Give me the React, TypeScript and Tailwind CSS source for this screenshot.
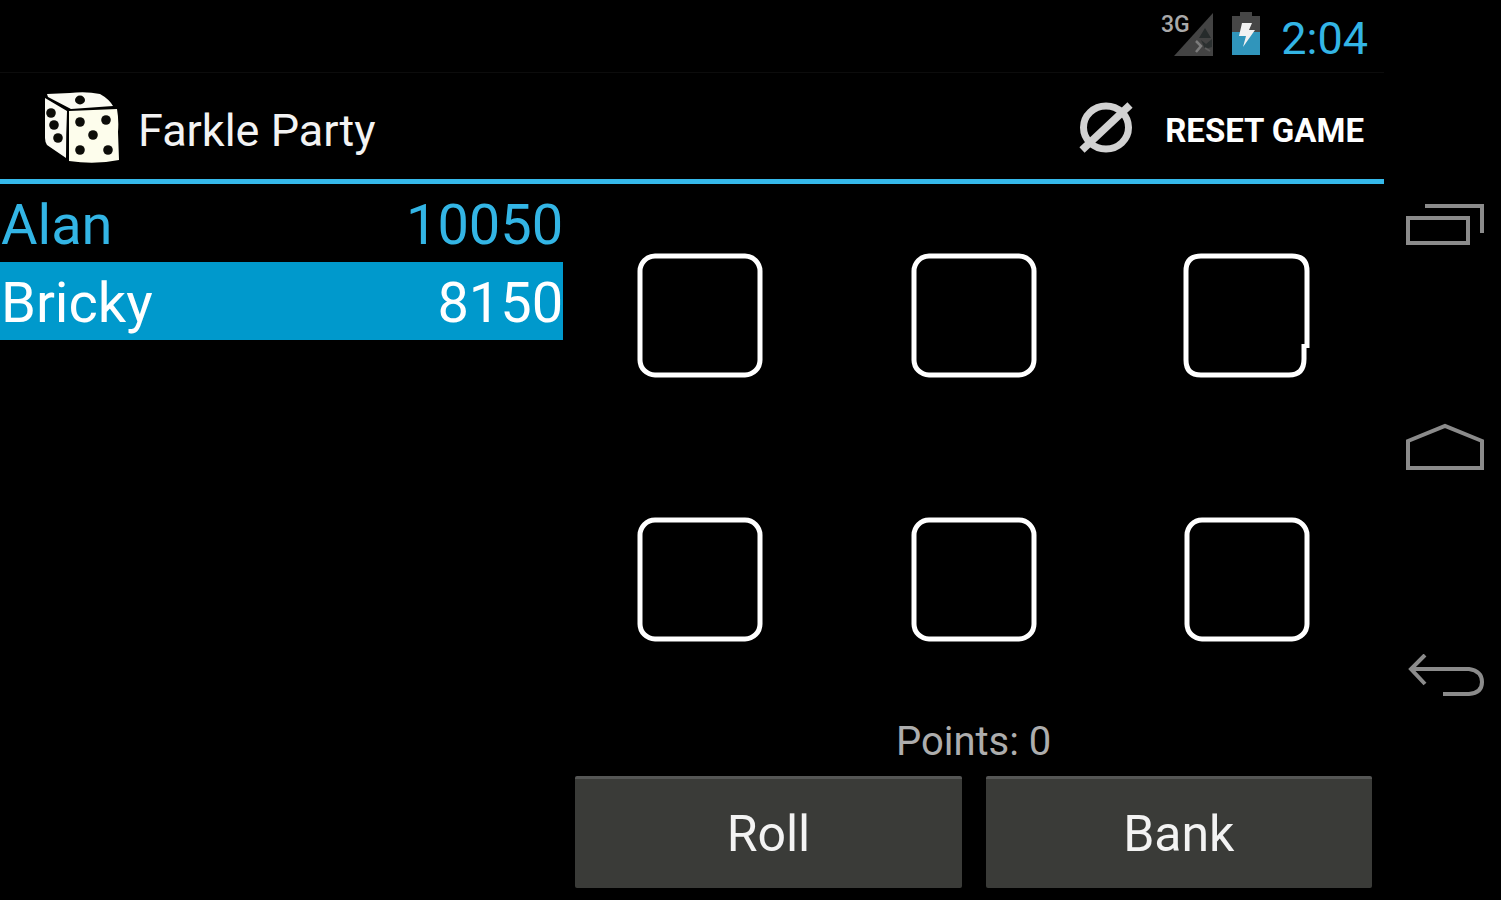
import React from "react";

type Player = { name: string; score: number; active: boolean };

const players: Player[] = [
  { name: "Alan", score: 10050, active: false },
  { name: "Bricky", score: 8150, active: true },
];

function SignalIcon() {
  return (
    <svg width="54" height="48" viewBox="0 0 54 48" aria-hidden="true">
      <path d="M52 3V46H13Z" fill="#434343" />
      <path d="M44 18l6 10H38Z" fill="#262b2b" />
      <path d="M35 31l5 5-5 6" fill="none" stroke="#7c7c7c" strokeWidth="2.5" />
      <path d="M40 30l5 4 6-5v8l-7 2Z" fill="#2b3030" />
      <path d="M44 38l5 3" fill="none" stroke="#5c5c5c" strokeWidth="2" />
      <text x="0" y="22" fill="#a9a9a9" fontSize="23" fontWeight="500" fontFamily="Roboto, sans-serif">
        3G
      </text>
    </svg>
  );
}

function BatteryIcon() {
  return (
    <svg width="30" height="44" viewBox="0 0 30 44" aria-hidden="true">
      <path d="M9 0H21V4H29V21H1V4H9Z" fill="#464646" />
      <path d="M1 20H29V43H1Z" fill="#3095bb" />
      <path d="M11 11H21L18 18H24L12 35L15 24H8Z" fill="#f2f2f2" />
    </svg>
  );
}

function DiceIcon() {
  return (
    <svg width="78" height="72" viewBox="0 0 78 72" aria-hidden="true">
      <path d="M3 2L26 1Q42-1 56 2Q65 7 69 14L27 17L4 5Z" fill="#fbfbf3" />
      <path d="M1 6L23 19Q22 42 22 66L3 53Q1 50 1 46Z" fill="#fbfbf3" />
      <path d="M25 19L73 17Q75 28 74 40L75 68Q51 73 25 69Z" fill="#fdfdec" />
      <g fill="#0c0c08">
        <ellipse cx="36" cy="8" rx="5" ry="4.4" />
        <circle cx="7" cy="21" r="4.8" />
        <circle cx="10" cy="33" r="4.8" />
        <circle cx="14" cy="46" r="4.8" />
        <circle cx="36" cy="30" r="4.8" />
        <circle cx="62" cy="28" r="4.8" />
        <circle cx="49" cy="43" r="4.8" />
        <circle cx="36" cy="58" r="4.8" />
        <circle cx="64" cy="58" r="4.8" />
      </g>
    </svg>
  );
}

function ResetIcon() {
  return (
    <svg width="54" height="52" viewBox="0 0 54 52" fill="none" stroke="#d2d2d2" aria-hidden="true">
      <ellipse cx="27" cy="25.5" rx="22.5" ry="21.5" strokeWidth="7" />
      <path d="M3 48L51 3" strokeWidth="7.5" />
    </svg>
  );
}

function RecentsIcon() {
  return (
    <svg width="80" height="44" viewBox="0 0 80 44" fill="none" stroke="#8b8b8b" strokeWidth="4" aria-hidden="true">
      <path d="M3 16H63V41H3Z" />
      <path d="M20 4H77V31" />
    </svg>
  );
}

function HomeIcon() {
  return (
    <svg width="80" height="54" viewBox="0 0 80 54" fill="none" stroke="#8b8b8b" strokeWidth="4" aria-hidden="true">
      <path d="M3 18L40 3L77 18V45H3Z" />
    </svg>
  );
}

function BackIcon() {
  return (
    <svg width="80" height="44" viewBox="0 0 80 44" fill="none" stroke="#8b8b8b" strokeWidth="4" aria-hidden="true">
      <path d="M20 1L6 15L20 30" />
      <path d="M6 15H64Q77 17 77 28Q77 39 64 40H38" />
    </svg>
  );
}

function Die({ chipped }: { chipped: boolean }) {
  return (
    <svg width="128" height="128" viewBox="0 0 128 128" fill="none" stroke="#ffffff" strokeWidth="5" aria-hidden="true">
      {chipped ? (
        <path d="M124 96V19Q124 4 109 4H18Q3 4 3 19V108Q3 123 18 123H106Q121 123 121 107V92" />
      ) : (
        <rect x="4" y="4" width="120" height="119" rx="15" />
      )}
    </svg>
  );
}

const actionClass =
  "h-28 flex-1 rounded-xs border-t-3 border-[#555655] bg-[#3a3b38] text-[50px] leading-none text-[#f3f3f3]";

export default function App() {
  return (
    <div className="flex min-h-screen bg-black font-[Roboto,sans-serif] text-white">
      <div className="flex flex-1 flex-col">
        <div className="flex h-[73px] items-center justify-end border-b border-[#0c0c0c] pr-4">
          <div className="flex items-center gap-4 pb-1">
            <SignalIcon />
            <BatteryIcon />
          </div>
          <time className="ml-5 pt-1 text-[45px] leading-none text-[#33b5e5]">2:04</time>
        </div>

        <header className="flex h-[111px] items-center justify-between border-b-5 border-[#35b9ea] pt-1 pr-5 pl-11">
          <div className="flex items-center gap-4">
            <DiceIcon />
            <h1 className="pt-1 text-[45px] leading-none text-[#f3f3f3]">Farkle Party</h1>
          </div>
          <button type="button" className="flex items-center gap-8 text-[33px] leading-none font-bold">
            <ResetIcon />
            <span className="pt-1">RESET GAME</span>
          </button>
        </header>

        <div className="flex flex-1">
          <table className="w-[40.7%] self-start text-[56px] leading-none">
            <tbody>
              {players.map((p) => (
                <tr key={p.name} className={p.active ? "h-[78px] bg-[#0099cc]" : "h-[78px] text-[#33b5e5]"}>
                  <th scope="row" className="pt-1 pl-px text-left font-normal">
                    {p.name}
                  </th>
                  <td className="pt-1 text-right">{p.score}</td>
                </tr>
              ))}
            </tbody>
          </table>

          <main className="flex flex-1 flex-col px-3 pb-3">
            <div className="-mx-3 grid flex-1 grid-cols-3 grid-rows-2">
              {[1, 2, 3, 4, 5, 6].map((n) => (
                <div key={n} className="flex items-center justify-center">
                  <button type="button" aria-label={`Die ${n}`}>
                    <Die chipped={n === 3} />
                  </button>
                </div>
              ))}
            </div>
            <p className="flex h-16 items-center justify-center pb-1 text-[40px] leading-none text-[#adadad]">
              Points: 0
            </p>
            <div className="flex gap-6">
              <button type="button" className={actionClass}>
                Roll
              </button>
              <button type="button" className={actionClass}>
                Bank
              </button>
            </div>
          </main>
        </div>
      </div>

      <nav aria-label="System" className="flex w-[117px] flex-col items-center justify-between py-[202px] pl-1">
        <button type="button" aria-label="Recent apps">
          <RecentsIcon />
        </button>
        <button type="button" aria-label="Home">
          <HomeIcon />
        </button>
        <button type="button" aria-label="Back">
          <BackIcon />
        </button>
      </nav>
    </div>
  );
}
